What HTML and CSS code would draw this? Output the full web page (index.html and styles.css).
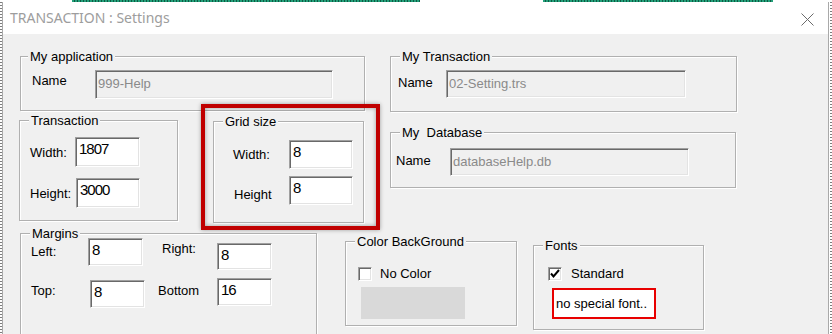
FILE: index.html
```html
<!DOCTYPE html>
<html>
<head>
<meta charset="utf-8">
<title>TRANSACTION : Settings</title>
<link rel="stylesheet" href="styles.css">
</head>
<body>
<div class="topstrip"><span class="seg seg1"></span><span class="seg seg2"></span></div>
<div class="desk">
  <div class="dots dots-l"></div>
  <div class="window">
    <div class="titlebar">
      <span class="title">TRANSACTION : Settings</span>
      <svg class="close" width="13" height="13" viewBox="0 0 13 13"><path d="M0.5 0.5 L12.5 12.5 M12.5 0.5 L0.5 12.5" stroke="#6b6b6b" stroke-width="1" fill="none"/></svg>
    </div>
    <div class="content">
      <div class="row row1">
        <div class="group g-app">
          <span class="legend legend-app">My application</span>
          <div class="field">
            <span class="lbl l-app">Name</span>
            <div class="edit disabled e-app">999-Help</div>
          </div>
        </div>
        <div class="group g-mytrans">
          <span class="legend">My Transaction</span>
          <div class="field">
            <span class="lbl l-mytrans">Name</span>
            <div class="edit disabled e-mytrans">02-Setting.trs</div>
          </div>
        </div>
      </div>

      <div class="row row2">
        <div class="group g-trans">
          <span class="legend">Transaction</span>
          <div class="field center">
            <span class="lbl l-tw">Width:</span>
            <div class="edit num e-tw">1807</div>
          </div>
          <div class="field center f-th">
            <span class="lbl l-th">Height:</span>
            <div class="edit num e-th">3000</div>
          </div>
        </div>
        <div class="group g-grid">
          <span class="legend">Grid size</span>
          <div class="field center">
            <span class="lbl l-gw">Width:</span>
            <div class="edit num e-grid">8</div>
          </div>
          <div class="field center f-gh">
            <span class="lbl l-gh">Height</span>
            <div class="edit num e-grid">8</div>
          </div>
          <div class="highlight"></div>
        </div>
        <div class="group g-db">
          <span class="legend">My&nbsp; Database</span>
          <div class="field">
            <span class="lbl l-db">Name</span>
            <div class="edit disabled e-db">databaseHelp.db</div>
          </div>
        </div>
      </div>

      <div class="row row3">
        <div class="group g-margins">
          <span class="legend">Margins</span>
          <div class="field mrow1">
            <span class="lbl l-left">Left:</span>
            <div class="edit num e-m1">8</div>
            <span class="lbl l-right">Right:</span>
            <div class="edit num e-m2">8</div>
          </div>
          <div class="field mrow2">
            <span class="lbl l-top">Top:</span>
            <div class="edit num e-m3">8</div>
            <span class="lbl l-bottom">Bottom</span>
            <div class="edit num e-m4">16</div>
          </div>
        </div>
        <div class="group g-color">
          <span class="legend">Color BackGround</span>
          <div class="check-row">
            <span class="checkbox"></span>
            <span class="lbl c-lbl">No Color</span>
          </div>
          <div class="swatch"></div>
        </div>
        <div class="group g-fonts">
          <span class="legend">Fonts</span>
          <div class="check-row">
            <span class="checkbox checked"><svg width="12" height="12" viewBox="0 0 12 12"><path d="M2 5.5 L4.5 8.5 L10 2" stroke="#000" stroke-width="2" fill="none"/></svg></span>
            <span class="lbl c-lbl2">Standard</span>
          </div>
          <div class="fontbox">no special font..</div>
        </div>
      </div>
    </div>
  </div>
  <div class="dots dots-r"></div>
</div>
</body>
</html>
```

FILE: styles.css
```css
* { box-sizing: border-box; margin: 0; padding: 0; }
html, body {
  width: 832px;
  height: 334px;
  overflow: hidden;
  background: #ffffff;
  font-family: "Liberation Sans", Arial, sans-serif;
  font-size: 13px;
  color: #000;
}

.topstrip { height: 2px; display: flex; }
.seg {
  display: block;
  height: 2px;
  background: repeating-linear-gradient(90deg, #22a07a 0 2px, #0e5a43 2px 3px);
}
.seg1 { margin-left: 72px; width: 348px; }
.seg2 { margin-left: 123px; width: 230px; }

.desk { display: flex; height: 332px; }
.dots {
  background: repeating-linear-gradient(180deg, #7d7d7d 0 1px, #ffffff 1px 3px);
}
.dots-l { width: 2px; }
.dots-r { width: 3px; border-left: 1px solid #fff; }

.window {
  width: 827px;
  height: 332px;
  border-left: 1px solid #a9a9a9;
  border-right: 1px solid #a9a9a9;
  background: #f0f0f0;
  overflow: hidden;
}

.titlebar {
  height: 32px;
  background: #ffffff;
  display: flex;
  align-items: center;
}
.title {
  padding-left: 7px;
  font-family: "Noto Sans", "Open Sans", sans-serif;
  font-size: 14px;
  color: #9d9d9d;
  line-height: 18px;
  margin-top: -1px;
}
.close { margin-left: auto; margin-right: 14px; margin-top: 2px; }

.row { display: flex; align-items: flex-start; }
.row1 { margin-top: 22px; }
.row3 { margin-top: 10px; }

.group {
  position: relative;
  border: 1px solid #b0b0b0;
  box-shadow: inset 1px 1px 0 #ffffff, 1px 1px 0 #ffffff;
}
.legend {
  position: absolute;
  top: -8px;
  left: 9px;
  padding: 0 2px;
  background: #f0f0f0;
  line-height: 15px;
  white-space: nowrap;
}
.legend-app { left: 7px; }

.lbl { line-height: 15px; white-space: nowrap; display: block; }
.field { display: flex; align-items: flex-start; }
.field.center { align-items: center; }

.edit {
  border: 1px solid;
  border-color: #a0a0a0 #ffffff #ffffff #a0a0a0;
  box-shadow: inset 1px 1px 0 #696969, inset -1px -1px 0 #e3e3e3;
  background: #ffffff;
  white-space: nowrap;
  overflow: hidden;
}
.edit.disabled {
  background: #f0f0f0;
  color: #8a8a8a;
  line-height: 15px;
  padding: 5px 2px 0 2px;
}
.edit.num {
  font-family: "Liberation Sans", Arial, sans-serif;
  font-size: 15px;
  letter-spacing: -1px;
  line-height: 17px;
  padding: 2px 2px 0 3px;
}

/* My application */
.g-app { margin-left: 17px; width: 345px; height: 55px; padding: 13px 0 0 11px; }
.l-app { width: 63px; margin-top: 3px; }
.e-app { width: 238px; height: 29px; }

/* My Transaction */
.g-mytrans { margin-left: 25px; width: 347px; height: 56px; padding: 13px 0 0 7px; }
.l-mytrans { width: 48px; margin-top: 5px; }
.e-mytrans { width: 240px; height: 28px; }

/* Transaction */
.g-trans { margin-left: 16px; margin-top: 8px; width: 159px; height: 101px; padding: 16px 0 0 10px; }
.l-tw { width: 45px; }
.l-th { width: 46px; }
.e-tw { width: 65px; height: 30px; }
.e-th { width: 64px; height: 30px; }
.f-th { margin-top: 11px; }

/* Grid size */
.g-grid { margin-left: 35px; margin-top: 9px; width: 151px; height: 102px; padding: 18px 0 0 19px; }
.l-gw { width: 56px; }
.l-gh { width: 56px; padding-left: 1px; margin-top: 7px; }
.e-grid { width: 64px; height: 29px; }
.f-gh { margin-top: 7px; }
.highlight {
  position: absolute;
  left: -13px;
  top: -18px;
  right: -17px;
  bottom: -8px;
  border: 4px solid #c00000;
  box-shadow: 0 0 4px rgba(0, 0, 0, 0.35), inset 0 0 4px rgba(0, 0, 0, 0.35);
  pointer-events: none;
}

/* My Database */
.g-db { margin-left: 26px; margin-top: 20px; width: 346px; height: 56px; padding: 15px 0 0 5px; }
.l-db { width: 54px; margin-top: 5px; }
.e-db { width: 239px; height: 28px; }

/* Margins */
.g-margins { margin-left: 17px; width: 297px; height: 110px; padding: 4px 0 0 10px; }
.l-left { width: 57px; margin-top: 6px; }
.e-m1 { width: 55px; height: 28px; }
.l-right { width: 55px; margin-left: 19px; margin-top: 3px; }
.e-m2 { width: 55px; height: 27px; margin-top: 5px; }
.mrow2 { margin-top: 8px; }
.l-top { width: 59px; margin-top: 5px; }
.e-m3 { width: 55px; height: 28px; margin-top: 2px; }
.l-bottom { width: 59px; margin-left: 13px; margin-top: 5px; }
.e-m4 { width: 55px; height: 28px; }

/* Color BackGround */
.g-color { margin-left: 28px; margin-top: 8px; width: 172px; height: 85px; padding: 24px 0 0 12px; }
.check-row { display: flex; align-items: center; }
.checkbox {
  display: flex;
  align-items: center;
  justify-content: center;
  width: 14px;
  height: 14px;
  border: 1px solid;
  border-color: #a0a0a0 #ffffff #ffffff #a0a0a0;
  box-shadow: inset 1px 1px 0 #696969, inset -1px -1px 0 #e3e3e3;
  background: #ffffff;
}
.c-lbl { margin-left: 8px; }
.c-lbl2 { margin-left: 9px; }
.swatch { margin: 6px 0 0 3px; width: 104px; height: 32px; background: #d9d9d9; }

/* Fonts */
.g-fonts { margin-left: 16px; margin-top: 12px; width: 171px; height: 85px; padding: 20px 0 0 14px; }
.fontbox {
  margin: 7px 0 0 4px;
  width: 104px;
  height: 31px;
  border: 2px solid #e80000;
  background: #ffffff;
  display: flex;
  align-items: center;
  padding-left: 2px;
  line-height: 15px;
  white-space: nowrap;
  overflow: hidden;
}
```
